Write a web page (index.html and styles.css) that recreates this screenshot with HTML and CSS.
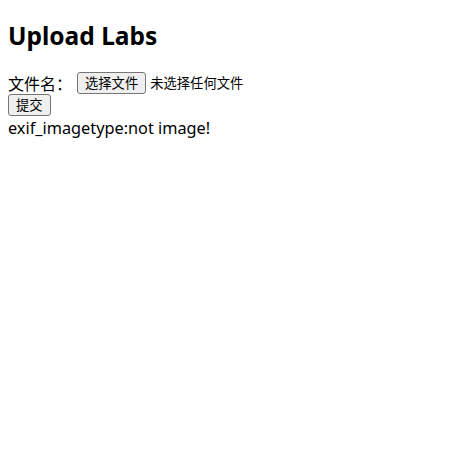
FILE: index.html
```html
<!DOCTYPE html>
<html lang="zh-CN">
<head>
<meta charset="utf-8">
<title>Upload Labs</title>
<link rel="stylesheet" href="styles.css">
</head>
<body>
<h1 class="title">Upload Labs</h1>
<form class="upload-form">
  <div class="row">
    <span class="label">文件名：</span>
    <span class="file-picker">
      <button type="button" class="btn">选择文件</button>
      <span class="file-status">未选择任何文件</span>
    </span>
  </div>
  <div class="row row-submit">
    <button type="button" class="btn">提交</button>
  </div>
</form>
<div class="msg">exif_imagetype:not image!</div>
</body>
</html>
```
FILE: styles.css
```css
html, body {
  background: #fff;
}
body {
  margin: 8px;
  font-family: "Noto Sans", "Noto Sans CJK SC", sans-serif;
  font-size: 16px;
  color: #000;
}
.title {
  font-size: 24.5px;
  font-weight: bold;
  margin: 12px 0 19px;
  line-height: 32px;
}
.upload-form {
  margin: 0;
}
.row {
  display: flex;
  align-items: center;
  height: 23px;
}
.row-submit {
  height: 22px;
}
.label {
  font-family: "Noto Sans CJK SC", sans-serif;
  font-size: 16px;
  margin-right: 5px;
}
.file-picker {
  display: inline-flex;
  align-items: center;
  gap: 4px;
}
.btn {
  font-family: "Noto Sans CJK SC", sans-serif;
  font-size: 13.3px;
  height: 22px;
  line-height: 18px;
  padding: 0 7px;
  background: #efefef;
  border: 1px solid #767676;
  border-radius: 3px;
  color: #000;
}
.file-status {
  font-family: "Noto Sans CJK SC", sans-serif;
  font-size: 13.3px;
}
.msg {
  font-size: 16.3px;
  line-height: 20px;
  margin-top: 2px;
}
```
